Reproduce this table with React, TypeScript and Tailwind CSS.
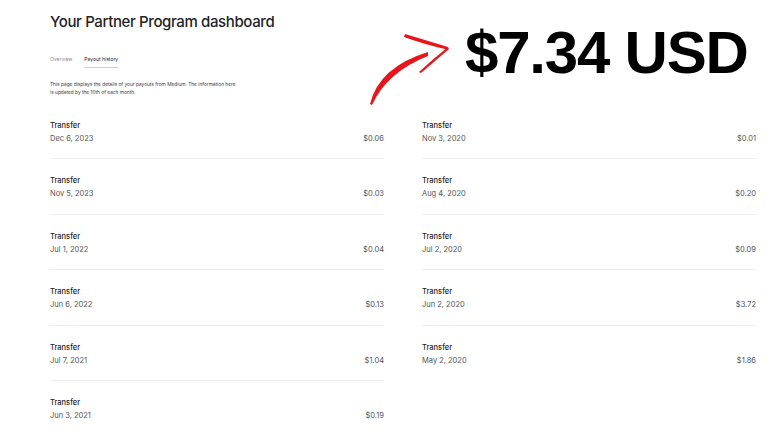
const LEFT = [
  { date: "Dec 6, 2023", amount: "$0.06" },
  { date: "Nov 5, 2023", amount: "$0.03" },
  { date: "Jul 1, 2022", amount: "$0.04" },
  { date: "Jun 6, 2022", amount: "$0.13" },
  { date: "Jul 7, 2021", amount: "$1.04" },
  { date: "Jun 3, 2021", amount: "$0.19" },
];

const RIGHT = [
  { date: "Nov 3, 2020", amount: "$0.01" },
  { date: "Aug 4, 2020", amount: "$0.20" },
  { date: "Jul 2, 2020", amount: "$0.09" },
  { date: "Jun 2, 2020", amount: "$3.72" },
  { date: "May 2, 2020", amount: "$1.86" },
];

type Payout = { date: string; amount: string };

function PayoutList({ items }: { items: Payout[] }) {
  return (
    <div className="flex flex-col">
      {items.map((p, i) => (
        <div
          key={p.date}
          className={
            i < items.length - 1
              ? "pt-[17px] pb-[14.4px] border-b border-[#f0f0f0]"
              : "pt-[17px] pb-[14.4px]"
          }
        >
          <div className="text-[7.5px] leading-[10px] font-medium text-[#242424]">Transfer</div>
          <div className="mt-[3px] flex justify-between text-[7.5px] leading-[10px] text-[#555555]">
            <span>{p.date}</span>
            <span>{p.amount}</span>
          </div>
        </div>
      ))}
    </div>
  );
}

function Arrow() {
  return (
    <svg width="90" height="80" viewBox="0 0 90 80" className="shrink-0">
      <path d="M5 76 Q14 39 63 24 L63 28 Q22 44 7 77 Z" fill="#e8141a" />
      <path d="M40 6 Q60 12 83 19 L82 21.5 Q58 16 39 9 Z" fill="#e8141a" />
      <path d="M83 19 L84 21 Q70 33 56 45 L54 44 Q68 31 83 19 Z" fill="#e8141a" />
    </svg>
  );
}

export default function App() {
  return (
    <div className="w-[784px] h-[441px] overflow-hidden bg-white font-['Inter',sans-serif]">
      <div className="flex h-[104px] pl-[50px]">
        <div className="w-[315px] shrink-0">
          <h1 className="pt-[11px] text-[15px] leading-[22px] font-medium tracking-[-0.025em] text-[#242424]">
            Your Partner Program dashboard
          </h1>
          <div className="mt-[22px] flex gap-[12px] text-[5px] leading-[8px]">
            <span className="text-[#8a8a8a]">Overview</span>
            <span className="pb-[4px] border-b border-[#cfcfcf] text-[#242424]">Payout history</span>
          </div>
          <p className="mt-[12px] w-[190px] text-[4.8px] leading-[8px] text-[#3d3d3d]">
            This page displays the details of your payouts from Medium. The information here is updated by the 10th of each month.
          </p>
        </div>
        <div className="mt-[28px]">
          <Arrow />
        </div>
        <div className="ml-[10px] pt-[20px] font-['Liberation_Sans',sans-serif] text-[60px] leading-[66px] font-bold tracking-[-0.02em] text-black">
          $7.34 USD
        </div>
      </div>
      <div className="grid grid-cols-[334px_334px] gap-x-[38px] pl-[50px]">
        <PayoutList items={LEFT} />
        <PayoutList items={RIGHT} />
      </div>
    </div>
  );
}
